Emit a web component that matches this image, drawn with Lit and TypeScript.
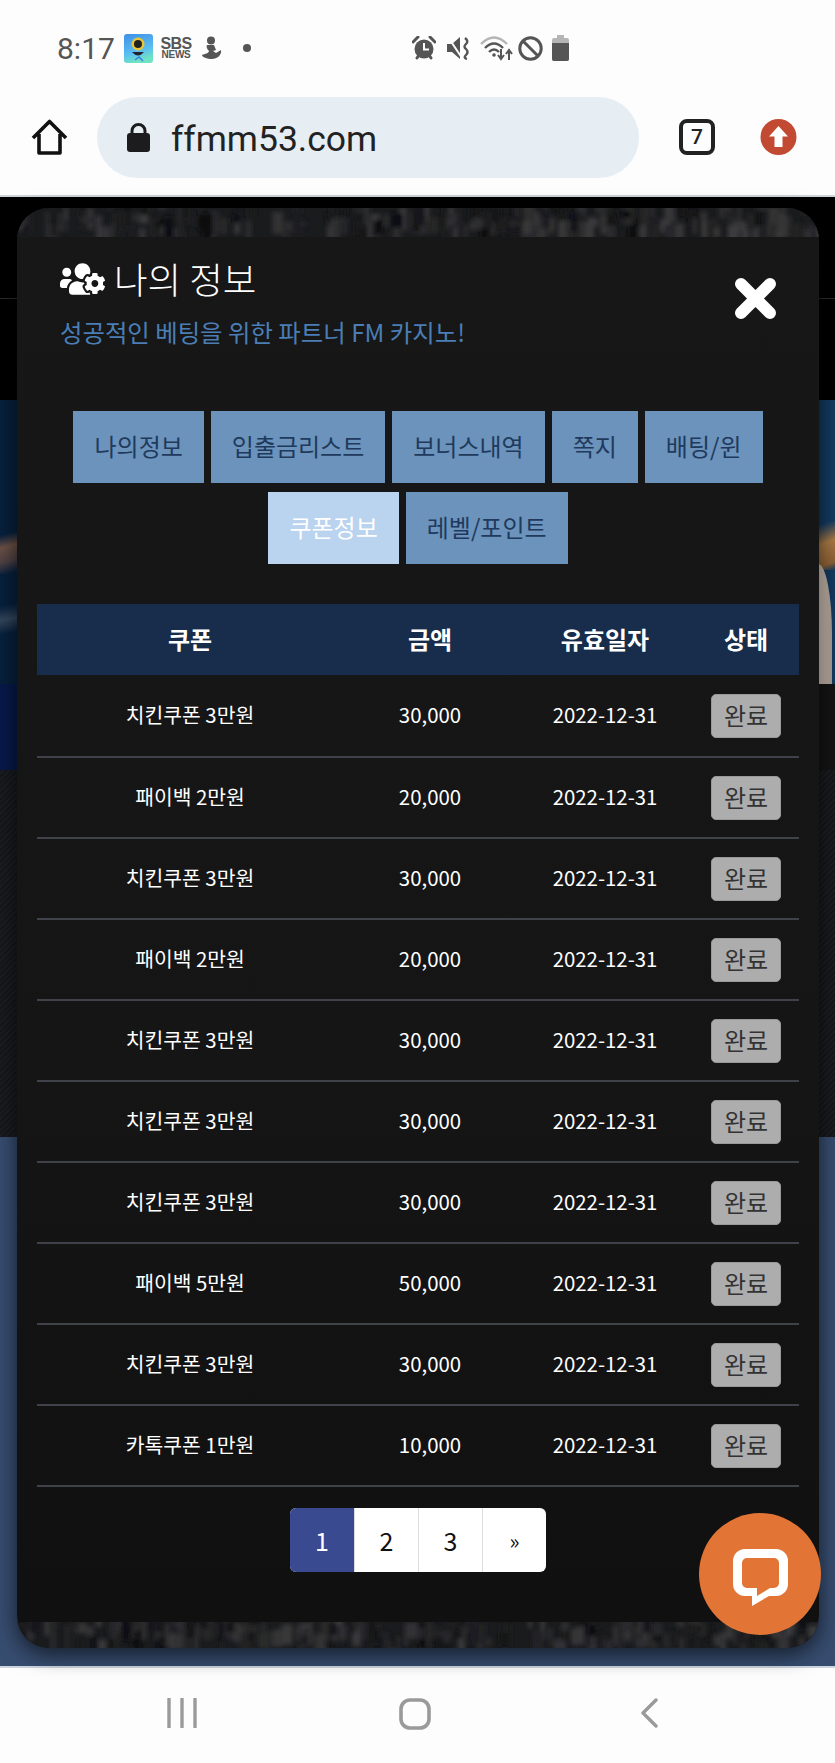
import { LitElement, css, html, svg } from "lit";
import { customElement } from "lit/decorators.js";

const TABS = ["나의정보", "입출금리스트", "보너스내역", "쪽지", "배팅/윈", "쿠폰정보", "레벨/포인트"];
const ACTIVE_TAB = "쿠폰정보";

const COUPONS = [
  ["치킨쿠폰 3만원", "30,000"],
  ["패이백 2만원", "20,000"],
  ["치킨쿠폰 3만원", "30,000"],
  ["패이백 2만원", "20,000"],
  ["치킨쿠폰 3만원", "30,000"],
  ["치킨쿠폰 3만원", "30,000"],
  ["치킨쿠폰 3만원", "30,000"],
  ["패이백 5만원", "50,000"],
  ["치킨쿠폰 3만원", "30,000"],
  ["카톡쿠폰 1만원", "10,000"],
];

const USERS_COG =
  "M610.5 341.3c2.6-14.1 2.6-28.5 0-42.6l25.8-14.9c3-1.7 4.3-5.2 3.3-8.5-6.7-21.6-18.2-41.2-33.2-57.4-2.3-2.5-6-3.1-9-1.4l-25.8 14.9c-10.9-9.3-23.4-16.5-36.9-21.3v-29.8c0-3.4-2.4-6.4-5.7-7.1-22.3-5-45-4.8-66.2 0-3.3.7-5.7 3.7-5.7 7.1v29.8c-13.5 4.8-26 12-36.9 21.3l-25.8-14.9c-2.9-1.7-6.7-1.1-9 1.4-15 16.2-26.5 35.8-33.2 57.4-1 3.3.4 6.8 3.3 8.5l25.8 14.9c-2.6 14.1-2.6 28.5 0 42.6l-25.8 14.9c-3 1.7-4.3 5.2-3.3 8.5 6.7 21.6 18.2 41.1 33.2 57.4 2.3 2.5 6 3.1 9 1.4l25.8-14.9c10.9 9.3 23.4 16.5 36.9 21.3v29.8c0 3.4 2.4 6.4 5.7 7.1 22.3 5 45 4.8 66.2 0 3.3-.7 5.7-3.7 5.7-7.1v-29.8c13.5-4.8 26-12 36.9-21.3l25.8 14.9c2.9 1.7 6.7 1.1 9-1.4 15-16.2 26.5-35.8 33.2-57.4 1-3.3-.4-6.8-3.3-8.5l-25.8-14.9zM496 368.5c-26.8 0-48.5-21.8-48.5-48.5s21.8-48.5 48.5-48.5 48.5 21.8 48.5 48.5-21.7 48.5-48.5 48.5zM96 224c35.3 0 64-28.7 64-64s-28.7-64-64-64-64 28.7-64 64 28.7 64 64 64zm224 32c1.9 0 3.7-.5 5.6-.6 8.3-21.7 20.5-42.1 36.3-59.2 7.4-8 17.9-12.6 28.9-12.6 6.9 0 13.7 1.8 19.6 5.3l7.9 4.6c.8-.5 1.6-.9 2.4-1.4 7-14.6 11.2-30.8 11.2-48 0-61.9-50.1-112-112-112S208 82.1 208 144c0 61.9 50.1 112 112 112zm105.2 194.5c-2.3-1.2-4.6-2.6-6.8-3.9-8.2 4.8-15.3 9.8-27.5 9.8-10.9 0-21.4-4.6-28.9-12.6-18.3-19.8-32.3-43.9-40.2-69.6-10.7-34.5 24.9-49.7 25.8-50.3-.1-2.6-.1-5.2 0-7.8l-7.9-4.6c-3.8-2.2-7-5-9.8-8.1-3.3.2-6.5.6-9.8.6-24.6 0-47.6-6-68.5-16h-8.3C179.6 288 128 339.6 128 403.2V432c0 26.5 21.5 48 48 48h255.4c-3.7-6-6.2-12.8-6.2-20.3v-9.2zM173.1 274.6C161.5 263.1 145.6 256 128 256H64c-35.3 0-64 28.7-64 64v32c0 17.7 14.3 32 32 32h65.9c6.3-47.4 34.9-87.3 75.2-109.4z";

// mottled stone strip at the top and bottom of the modal
function texture(seed: number, height: number) {
  let s = seed;
  const rnd = () => {
    s = (s * 16807) % 2147483647;
    return s / 2147483647;
  };
  const rects = [];
  for (let i = 0; i < 240; i++) {
    const g = Math.floor(14 + rnd() * 46);
    rects.push(
      svg`<rect x=${rnd() * 802} y=${rnd() * height - 8} width=${2 + rnd() * 10} height=${6 + rnd() * 20}
        fill="rgb(${g},${g},${g + 2})" />`
    );
  }
  return html`<svg class="stone" width="802" height=${height} viewBox="0 0 802 ${height}">
    <defs><filter id="soft${seed}"><feGaussianBlur stdDeviation="2.2" /></filter></defs>
    <rect width="802" height=${height} fill="#1a1b1d" />
    <g filter="url(#soft${seed})">${rects}</g>
  </svg>`;
}

@customElement("app-root")
export class AppRoot extends LitElement {
  static styles = css`
    :host {
      display: block;
      position: relative;
      width: 835px;
      height: 1763px;
      overflow: hidden;
      background: #fff;
      font-family: "Noto Sans CJK KR", "Noto Sans", sans-serif;
    }
    .top {
      height: 195px;
      background: #fdfdfe;
      border-bottom: 2px solid #cfd3da;
    }
    .status {
      height: 90px;
      display: flex;
      align-items: center;
      padding: 6px 0 0 57px;
      box-sizing: border-box;
      color: #555;
    }
    .time {
      font: 400 30px Roboto, sans-serif;
      width: 67px;
    }
    .app {
      margin-right: 8px;
    }
    .sbs {
      width: 30px;
      display: flex;
      flex-direction: column;
      align-items: center;
      font: 700 16px/13px "Liberation Sans", sans-serif;
      letter-spacing: -0.6px;
      color: #555;
    }
    .sbs small {
      font-size: 10px;
      line-height: 10px;
      letter-spacing: -0.3px;
    }
    .figure {
      margin-left: 10px;
    }
    .dot {
      width: 8px;
      height: 8px;
      border-radius: 50%;
      background: #555;
      margin-left: 21px;
    }
    .sys {
      display: flex;
      align-items: center;
      margin-left: 161px;
    }
    .sys svg {
      flex: none;
    }
    .mute {
      margin-left: 11px;
    }
    .wifi {
      margin-left: 8px;
    }
    .block {
      margin-left: 5px;
    }
    .batt {
      margin-left: 9px;
    }
    .url {
      height: 105px;
      padding: 7px 0 0 31px;
      box-sizing: border-box;
      display: flex;
      align-items: flex-start;
    }
    .url .home {
      margin: 22px 29px 0 0;
    }
    .pill {
      width: 542px;
      height: 81px;
      border-radius: 41px;
      background: #e6edf3;
      display: flex;
      align-items: center;
      padding-left: 30px;
      box-sizing: border-box;
      gap: 21px;
      font: 400 35.5px Roboto, sans-serif;
      color: #222;
    }
    .pill span {
      padding-top: 2px;
    }
    .tabcount {
      width: 36px;
      height: 36px;
      box-sizing: border-box;
      margin: 22px 45px 0 40px;
      border: 4px solid #222;
      border-radius: 8px;
      display: flex;
      align-items: center;
      justify-content: center;
      font: 500 21px Roboto, sans-serif;
      color: #222;
    }
    .upload {
      margin-top: 22px;
    }

    .page {
      height: 1469px;
      display: flex;
      flex-direction: column;
    }
    .head {
      height: 203px;
      box-sizing: border-box;
      background: #000;
      padding-top: 101px;
    }
    .head hr {
      margin: 0;
      border: 0;
      height: 1px;
      background: #2b2b2b;
    }
    .hero {
      position: relative;
      height: 284px;
      background: linear-gradient(90deg, #07203c 0, #07203c 50%, #123a60 50%);
    }
    .arm {
      position: absolute;
      left: 0;
      top: 128px;
      width: 17px;
      height: 46px;
      background: linear-gradient(165deg, #07203c 15%, #6b5046 40%, #4f4144 70%, #07203c 95%);
    }
    .fold {
      position: absolute;
      left: 0;
      top: 198px;
      width: 17px;
      height: 38px;
      background: linear-gradient(170deg, #07203c 20%, #33465c 55%, #07203c 90%);
    }
    .hair {
      position: absolute;
      right: 0;
      top: 120px;
      width: 17px;
      height: 50px;
      background: linear-gradient(160deg, #123a60 10%, #a97a44 45%, #8f6236 85%, #123a60);
    }
    .skin {
      position: absolute;
      left: 818px;
      top: 164px;
      width: 14px;
      height: 120px;
      border-top-right-radius: 14px 70px;
      background: linear-gradient(90deg, #d2c4b8, #a99c92);
    }
    .strip {
      height: 86px;
      background: linear-gradient(90deg, #08194a 0, #08194a 50%, #141414 50%);
    }
    .hatch {
      height: 367px;
      background: repeating-linear-gradient(135deg, #15171a 0 2px, #1b1d21 2px 4px);
    }
    .navy {
      flex: 1;
      background: #374d70;
    }

    .modal {
      position: absolute;
      left: 17px;
      top: 208px;
      width: 802px;
      height: 1440px;
      border-radius: 32px;
      overflow: hidden;
      display: flex;
      flex-direction: column;
      background: linear-gradient(#171717, #151515 60%, #101011);
      box-shadow: 0 6px 22px rgba(0, 0, 0, 0.65);
      color: #fff;
    }
    .stone {
      display: block;
      flex: none;
    }
    .body {
      flex: 1;
      padding: 0 20px;
      display: flex;
      flex-direction: column;
    }
    .title {
      position: relative;
      padding: 18px 0 0 23px;
      height: 174px;
      box-sizing: border-box;
    }
    h1 {
      margin: 0;
      display: flex;
      align-items: center;
      gap: 9px;
      font-size: 36.5px;
      line-height: 48px;
      font-weight: 300;
    }
    .sub {
      margin-top: 11px;
      font-size: 24.4px;
      line-height: 36px;
      color: #4a7eb5;
    }
    .close {
      position: absolute;
      left: 697px;
      top: 40px;
    }
    .tabs {
      display: flex;
      flex-wrap: wrap;
      justify-content: center;
      gap: 9px 7px;
    }
    .tab {
      height: 72px;
      padding: 0 21px 3px;
      box-sizing: border-box;
      display: flex;
      align-items: center;
      background: #6b93bc;
      color: #1f3a5c;
      font-size: 24px;
    }
    .tab.on {
      background: #bad3ee;
      color: #fff;
    }
    .table {
      margin-top: 40px;
    }
    .row {
      display: grid;
      grid-template-columns: 306px 174px 176px 106px;
      align-items: center;
      justify-items: center;
      height: 81px;
      box-sizing: border-box;
      border-bottom: 2px solid #3f4248;
      font-size: 20.4px;
    }
    .row > span:not(.done) {
      padding-bottom: 4px;
    }
    .row.th {
      height: 71px;
      border: 0;
      background: #182c4b;
      font-size: 24px;
      font-weight: 700;
    }
    .row.th > span {
      padding-bottom: 2px;
    }
    .row.th + .row {
      height: 83px;
    }
    .done {
      width: 70px;
      height: 44px;
      box-sizing: border-box;
      border: 1px solid #999;
      border-radius: 5px;
      background: #adadad;
      color: #333;
      font-size: 24px;
      padding-bottom: 2px;
      display: flex;
      align-items: center;
      justify-content: center;
    }
    .pager {
      margin-top: 21px;
      align-self: center;
      display: flex;
      border-radius: 6px;
      overflow: hidden;
      background: #fff;
      color: #111;
    }
    .pager span {
      width: 64px;
      height: 64px;
      display: flex;
      align-items: center;
      justify-content: center;
      font-size: 25px;
      box-sizing: border-box;
      border-left: 1px solid #ddd;
    }
    .pager span.on {
      background: #3a4a90;
      color: #fff;
      border: 0;
    }
    .pager span:last-child {
      font-size: 21px;
    }
    .chat {
      position: absolute;
      left: 699px;
      top: 1513px;
      width: 122px;
      height: 122px;
      border-radius: 50%;
      background: #e27535;
      display: flex;
      align-items: center;
      justify-content: center;
    }
    .chat svg {
      margin-top: 7px;
    }
    .nav {
      height: 97px;
      background: #fdfdfe;
      border-top: 2px solid #cdd5e0;
      box-sizing: border-box;
      padding: 30px 0 0 167px;
      display: flex;
      align-items: flex-start;
    }
    .nav .home {
      margin: 0 209px 0 202px;
    }
  `;

  renderStatus() {
    return html`<div class="status">
      <span class="time">8:17</span>
      <svg class="app" width="29" height="29" viewBox="0 0 29 29">
        <defs>
          <linearGradient id="app" x1="0" y1="0" x2="0.3" y2="1">
            <stop offset="0" stop-color="#3f8fe8" />
            <stop offset="0.7" stop-color="#5cc0f0" />
            <stop offset="1" stop-color="#6fe3c4" />
          </linearGradient>
        </defs>
        <rect width="29" height="29" rx="3" fill="url(#app)" />
        <circle cx="14" cy="10" r="6.5" fill="#e8c63a" />
        <circle cx="14" cy="10" r="4" fill="#222" />
        <path d="M8 18 Q14 25 20 18 Z" fill="#223" />
        <path d="M11 26 L15 23 L19 27" stroke="#3f7fe0" stroke-width="1.5" fill="none" />
      </svg>
      <span class="sbs">SBS<small>NEWS</small></span>
      <svg class="figure" width="21" height="24" viewBox="0 0 21 24">
        <circle cx="10" cy="4.5" r="4" fill="#555" />
        <path d="M6 9h7l2 5-3 1 3 2 5-3c1 5-4 9-9 9-5 0-10-2-10-4 3-1 7-2 7-4-2-2-3-4-2-6z" fill="#555" />
      </svg>
      <span class="dot"></span>
      <div class="sys">
        <svg width="24" height="24" viewBox="0 0 24 24">
          <path d="M1 6 L6 1 M23 6 L18 1" stroke="#555" stroke-width="3" stroke-linecap="round" />
          <circle cx="12" cy="13" r="9.5" fill="#555" />
          <path d="M12 7v6.5h5" stroke="#fff" stroke-width="2" fill="none" />
          <path d="M5 22l2-3M19 22l-2-3" stroke="#555" stroke-width="3" stroke-linecap="round" />
        </svg>
        <svg class="mute" width="25" height="24" viewBox="0 0 25 24">
          <path d="M0 8h5l8-7v22l-8-7H0z" fill="#555" />
          <path d="M1 1 L15 22" stroke="#fdfdfe" stroke-width="2" />
          <path d="M18 2q4 3 1 6t0 5q3 3 0 6t1 4" stroke="#555" stroke-width="2.4" fill="none" />
        </svg>
        <svg class="wifi" width="33" height="26" viewBox="0 0 33 26">
          <path d="M1 9 Q14 -4 27 9" stroke="#b5b5b5" stroke-width="2.4" fill="none" />
          <path d="M5 13 Q14 4 23 13" stroke="#555" stroke-width="2.4" fill="none" />
          <path d="M9 17 Q14 12 19 17" stroke="#555" stroke-width="2.4" fill="none" />
          <circle cx="14" cy="20" r="1.8" fill="#555" />
          <path d="M21 14v9m-3-3 3 4 3-4M29 25v-9m-3 3 3-4 3 4" stroke="#555" stroke-width="2" fill="none" />
        </svg>
        <svg class="block" width="25" height="25" viewBox="0 0 25 25">
          <circle cx="12.5" cy="12.5" r="10.7" stroke="#555" stroke-width="3" fill="none" />
          <path d="M5 5 L20 20" stroke="#555" stroke-width="3" />
        </svg>
        <svg class="batt" width="17" height="26" viewBox="0 0 17 26">
          <path d="M5 0h7v3h3a2 2 0 0 1 2 2v19a2 2 0 0 1-2 2H2a2 2 0 0 1-2-2V5a2 2 0 0 1 2-2h3z" fill="#b5b5b5" />
          <path d="M0 8h17v16a2 2 0 0 1-2 2H2a2 2 0 0 1-2-2z" fill="#555" />
        </svg>
      </div>
    </div>`;
  }

  renderUrl() {
    return html`<div class="url">
      <svg class="home" width="37" height="36" viewBox="0 0 37 36">
        <path d="M2 19 L18.5 2.5 L35 19 M8 15 V34 H29 V15" stroke="#111" stroke-width="3.6" fill="none" stroke-linejoin="round" />
      </svg>
      <div class="pill">
        <svg width="23" height="29" viewBox="0 0 23 29">
          <path d="M5 12V8a6.5 6.5 0 0 1 13 0v4" stroke="#1c1c1e" stroke-width="3" fill="none" />
          <rect y="10" width="23" height="19" rx="3" fill="#1c1c1e" />
        </svg>
        <span>ffmm53.com</span>
      </div>
      <div class="tabcount">7</div>
      <svg class="upload" width="37" height="36" viewBox="0 0 37 36">
        <circle cx="18.5" cy="18" r="18" fill="#c24a32" />
        <path d="M18.5 7 L28 17.5 H22.5 V28 H14.5 V17.5 H9 Z" fill="#fff" />
      </svg>
    </div>`;
  }

  renderModal() {
    return html`<div class="modal">
      ${texture(7, 29)}
      <div class="body">
        <div class="title">
          <h1>
            <svg width="45" height="36" viewBox="0 0 640 512"><path d=${USERS_COG} fill="#fff" /></svg>
            나의 정보
          </h1>
          <div class="sub">성공적인 베팅을 위한 파트너 FM 카지노!</div>
          <svg class="close" width="43" height="43" viewBox="0 0 43 43">
            <path d="M7 7 L36 36 M36 7 L7 36" stroke="#fff" stroke-width="12" stroke-linecap="round" />
          </svg>
        </div>
        <div class="tabs">
          ${TABS.map((t) => html`<div class="tab ${t === ACTIVE_TAB ? "on" : ""}">${t}</div>`)}
        </div>
        <div class="table">
          <div class="row th"><span>쿠폰</span><span>금액</span><span>유효일자</span><span>상태</span></div>
          ${COUPONS.map(
            ([name, amount]) => html`<div class="row">
              <span>${name}</span><span>${amount}</span><span>2022-12-31</span>
              <span class="done">완료</span>
            </div>`
          )}
        </div>
        <div class="pager">
          <span class="on">1</span><span>2</span><span>3</span><span>»</span>
        </div>
      </div>
      ${texture(11, 26)}
    </div>`;
  }

  render() {
    return html`
      <div class="top">${this.renderStatus()}${this.renderUrl()}</div>
      <div class="page">
        <div class="head"><hr /></div>
        <div class="hero">
          <div class="arm"></div>
          <div class="fold"></div>
          <div class="hair"></div>
          <div class="skin"></div>
        </div>
        <div class="strip"></div>
        <div class="hatch"></div>
        <div class="navy"></div>
      </div>
      ${this.renderModal()}
      <div class="chat">
        <svg width="55" height="57" viewBox="0 0 55 57">
          <path
            d="M12 0h31a12 12 0 0 1 12 12v23a12 12 0 0 1-12 12H36L19 57V47h-7A12 12 0 0 1 0 35V12A12 12 0 0 1 12 0z M14 9a5 5 0 0 0-5 5v20a5 5 0 0 0 5 5h10v8l13-8h4a5 5 0 0 0 5-5V14a5 5 0 0 0-5-5z"
            fill="#fff"
            fill-rule="evenodd"
          />
        </svg>
      </div>
      <div class="nav">
        <svg width="30" height="30" viewBox="0 0 30 30">
          <path d="M2 1v28M15 1v28M28 1v28" stroke="#9a9a9a" stroke-width="3.4" stroke-linecap="round" />
        </svg>
        <svg class="home" width="32" height="32" viewBox="0 0 32 32">
          <rect x="2" y="2" width="28" height="28" rx="9" stroke="#9a9a9a" stroke-width="3.6" fill="none" />
        </svg>
        <svg width="18" height="30" viewBox="0 0 18 30">
          <path d="M16 2 L3 15 L16 28" stroke="#9a9a9a" stroke-width="3.4" fill="none" stroke-linecap="round" stroke-linejoin="round" />
        </svg>
      </div>
    `;
  }
}
